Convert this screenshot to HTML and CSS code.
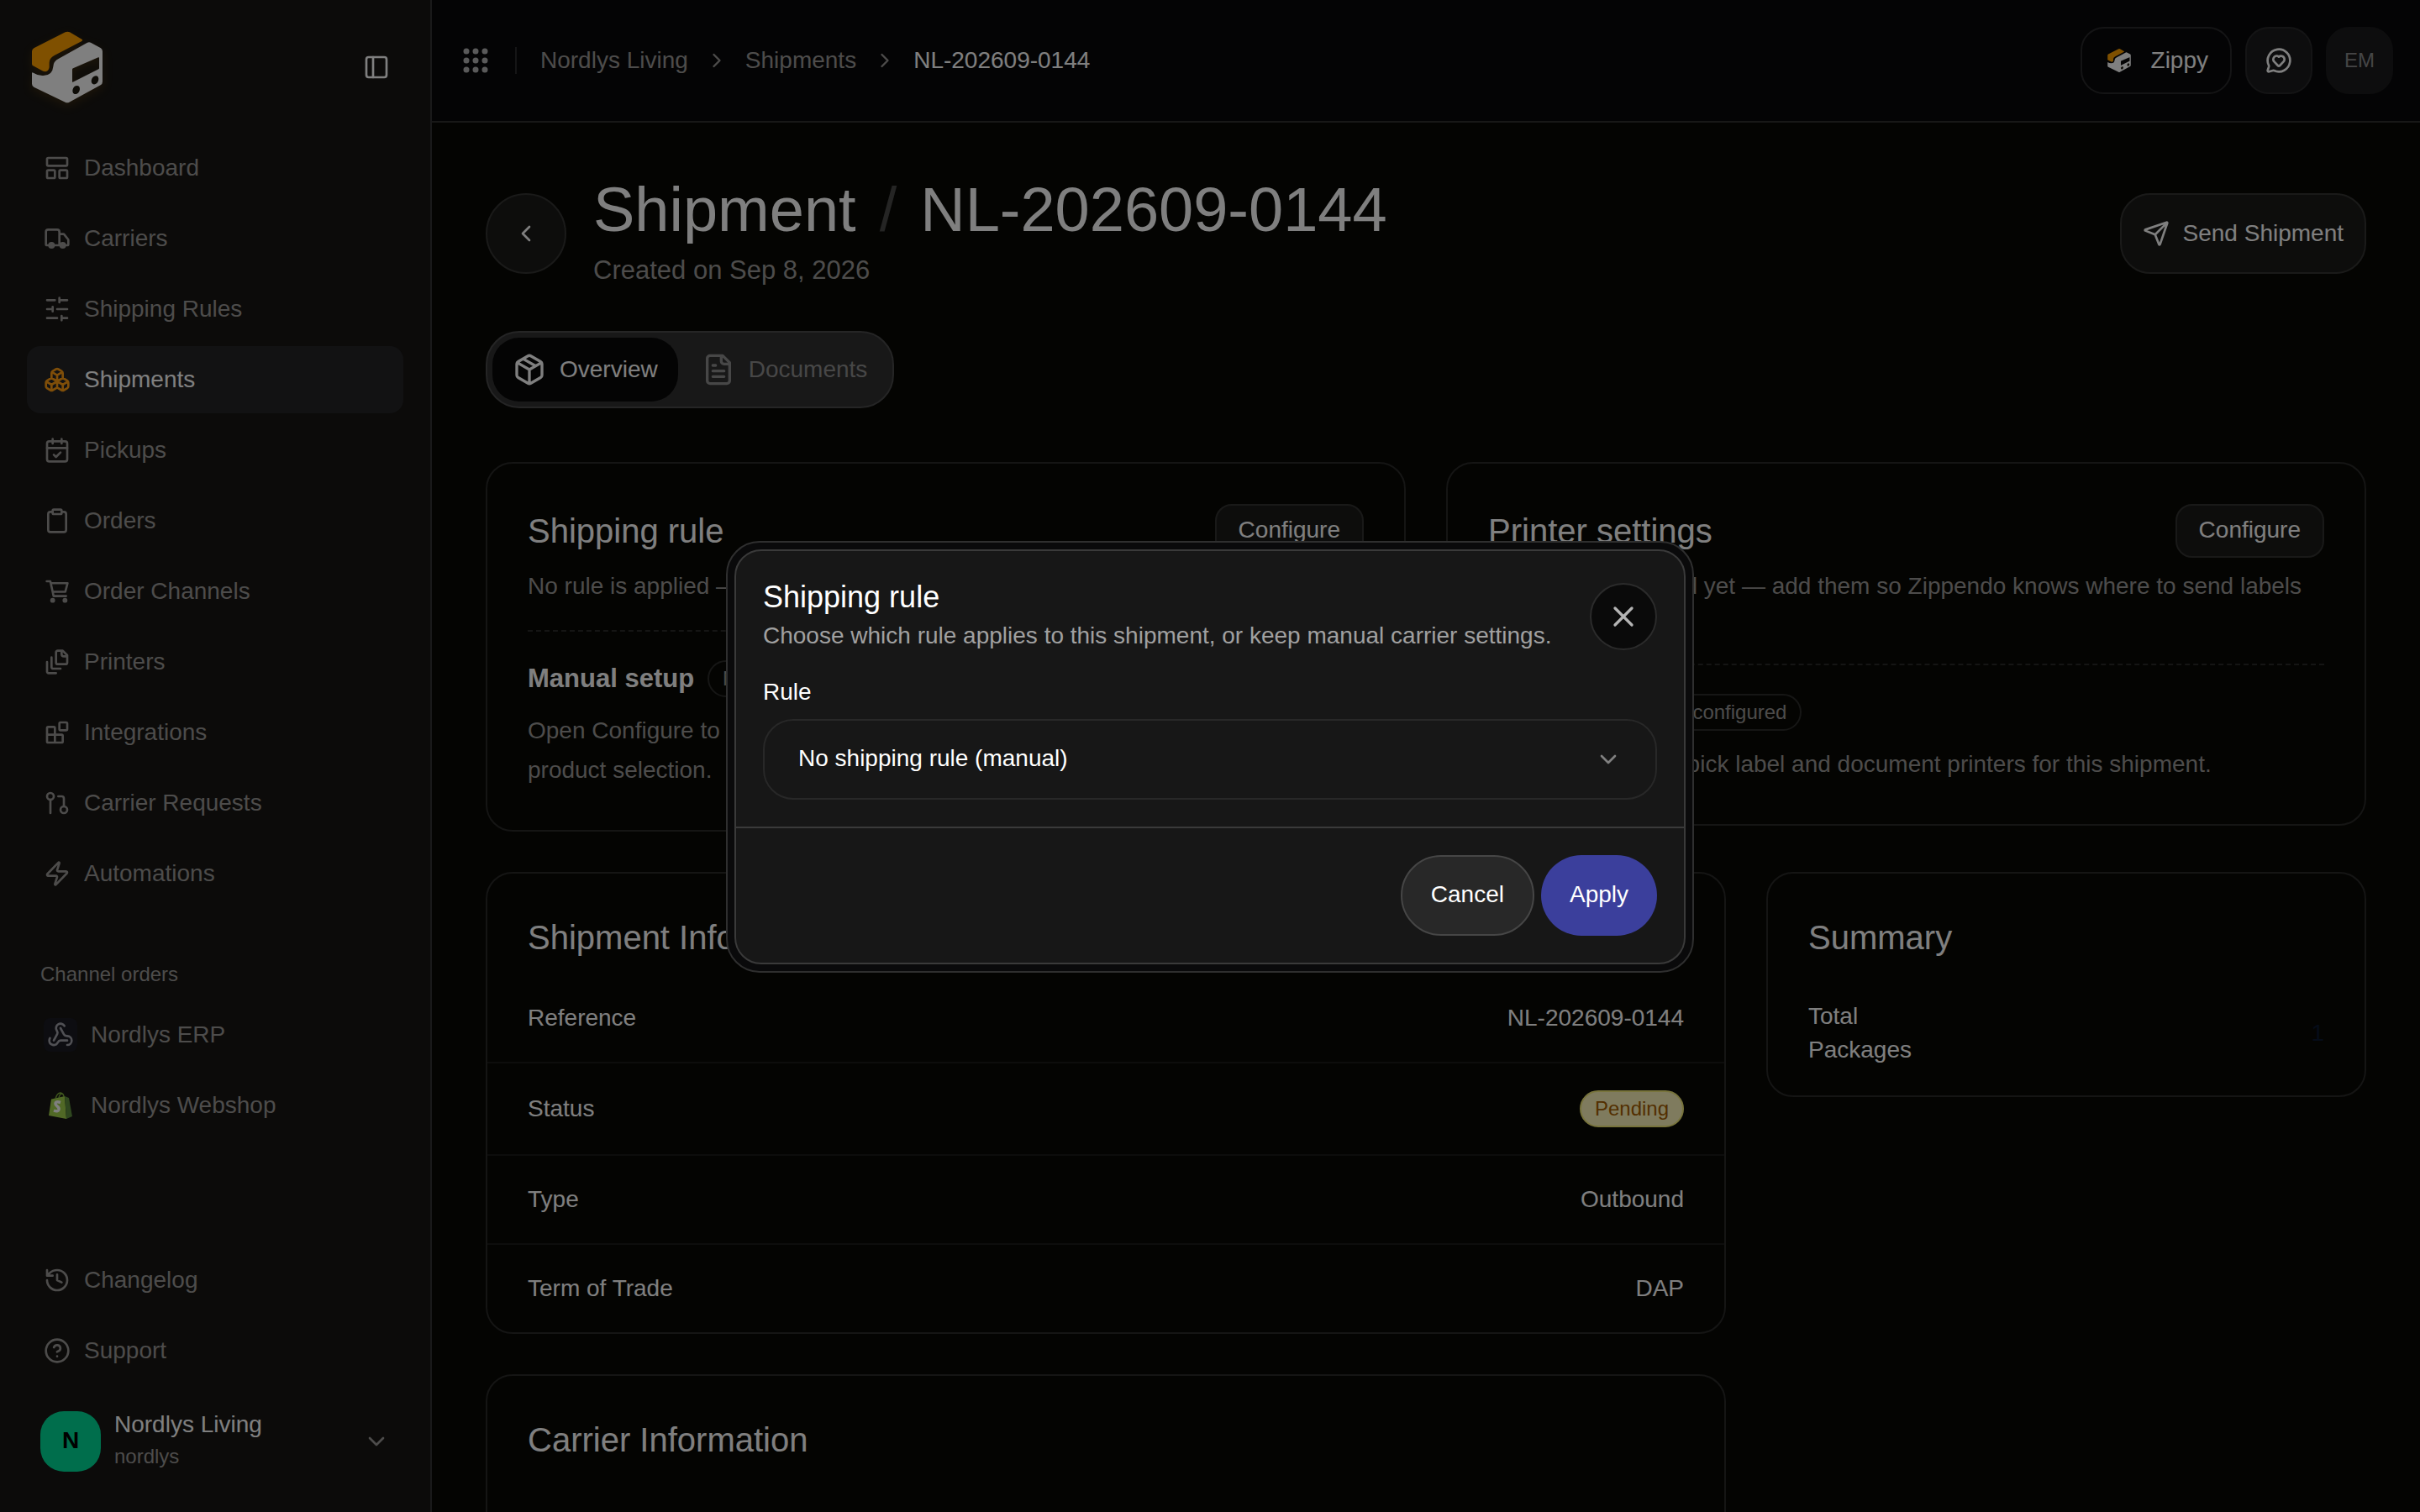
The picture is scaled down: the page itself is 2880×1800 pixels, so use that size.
FILE: index.html
```html
<!DOCTYPE html>
<html lang="en">
<head>
    <meta charset="UTF-8">
    <meta name="viewport" content="width=device-width, initial-scale=1.0">
    <title>Shipment NL-202609-0144</title>
    <link rel="stylesheet" href="styles.css">
</head>
<body>
    <svg class="defs" aria-hidden="true">
        <symbol id="logo" viewBox="0 0 252 256">
            <path fill="#ffa000" d="M0 72q0-8 7-12L119 3q8-4 16 0l43 25q5 3 0 7L80 86q-18 10-18 26v16q-3 20-22 14L4 123q-4-2-4-7z"/>
            <path fill="#fff" fill-rule="evenodd" d="M0 150q0-5 5-2 14 9 32 10 36 2 39-32 0-19 20-29L198 40q6-3 12 0l36 20q6 4 6 12v108q0 8-7 12l-112 61q-7 4-14 0L7 199q-7-4-7-12zM144 136v44q0 2 2 1l92-46q2-1 2-3V94q0-2-3-1l-90 39q-3 1-3 4z"/>
            <ellipse cx="158" cy="209" rx="12" ry="16" fill="#1c180e" transform="rotate(28 158 209)"/>
            <ellipse cx="225" cy="174" rx="12" ry="16" fill="#1c180e" transform="rotate(28 225 174)"/>
        </symbol>
        <symbol id="chevron-right" viewBox="0 0 24 24"><path d="m9 18 6-6-6-6"/></symbol>
        <symbol id="chevron-down" viewBox="0 0 24 24"><path d="m6 9 6 6 6-6"/></symbol>
    </svg>

    <div class="app">
        <aside class="sidebar">
            <div class="sidebar-top">
                <a href="#" class="brand" aria-label="Zippendo"><svg class="brand-logo"><use href="#logo"/></svg></a>
                <button class="toggle" aria-label="Toggle sidebar">
                    <svg class="icon" viewBox="0 0 24 24"><rect x="3" y="3" width="18" height="18" rx="2"/><path d="M9 3v18"/></svg>
                </button>
            </div>

            <nav class="nav">
                <a href="#" class="nav-item">
                    <svg class="icon" viewBox="0 0 24 24"><rect x="3" y="3" width="18" height="7" rx="1"/><rect x="3" y="14" width="7" height="7" rx="1"/><rect x="14" y="14" width="7" height="7" rx="1"/></svg>
                    Dashboard
                </a>
                <a href="#" class="nav-item">
                    <svg class="icon" viewBox="0 0 24 24"><path d="M14 18V6a2 2 0 0 0-2-2H4a2 2 0 0 0-2 2v11a1 1 0 0 0 1 1h2M15 18H9M19 18h2a1 1 0 0 0 1-1v-3.65a1 1 0 0 0-.22-.624l-3.48-4.35A1 1 0 0 0 17.52 8H14"/><circle cx="17" cy="18" r="2" fill="currentColor"/><circle cx="7" cy="18" r="2" fill="currentColor"/></svg>
                    Carriers
                </a>
                <a href="#" class="nav-item">
                    <svg class="icon" viewBox="0 0 24 24"><path d="M21 4h-7M10 4H3M21 12h-9M8 12H3M21 20h-5M12 20H3M14 2v4M8 10v4M16 18v4"/></svg>
                    Shipping Rules
                </a>
                <a href="#" class="nav-item active">
                    <svg class="icon" viewBox="0 0 24 24"><path d="M2.97 12.92A2 2 0 0 0 2 14.63v3.24a2 2 0 0 0 .97 1.71l3 1.8a2 2 0 0 0 2.06 0L12 19v-5.5l-5-3-4.03 2.42ZM7 16.5l-4.74-2.85M7 16.5l5-3M7 16.5v5.17M12 13.5V19l3.97 2.38a2 2 0 0 0 2.06 0l3-1.8a2 2 0 0 0 .97-1.71v-3.24a2 2 0 0 0-.97-1.71L17 10.5l-5 3ZM17 16.5l-5-3M17 16.5l4.74-2.85M17 16.5v5.17M7.97 4.42A2 2 0 0 0 7 6.13v4.37l5 3 5-3V6.13a2 2 0 0 0-.97-1.71l-3-1.8a2 2 0 0 0-2.06 0l-3 1.8ZM12 8 7.26 5.15M12 8l4.74-2.85M12 13.5V8"/></svg>
                    Shipments
                </a>
                <a href="#" class="nav-item">
                    <svg class="icon" viewBox="0 0 24 24"><path d="M8 2v4M16 2v4M3 10h18M9 16l2 2 4-4"/><rect x="3" y="4" width="18" height="18" rx="2"/></svg>
                    Pickups
                </a>
                <a href="#" class="nav-item">
                    <svg class="icon" viewBox="0 0 24 24"><rect x="8" y="2" width="8" height="4" rx="1"/><path d="M16 4h2a2 2 0 0 1 2 2v14a2 2 0 0 1-2 2H6a2 2 0 0 1-2-2V6a2 2 0 0 1 2-2h2"/></svg>
                    Orders
                </a>
                <a href="#" class="nav-item">
                    <svg class="icon" viewBox="0 0 24 24"><path d="M2.7 3h3.2l.4 1.7L8 12.4l.8 3.8H20M6.3 4.7h15l-2 7.7H8"/><circle cx="8" cy="20" r="1.2" fill="currentColor"/><circle cx="19" cy="20" r="1.2" fill="currentColor"/></svg>
                    Order Channels
                </a>
                <a href="#" class="nav-item">
                    <svg class="icon" viewBox="0 0 24 24"><path d="M21 7h-3a2 2 0 0 1-2-2V2M21 6v6.5c0 .8-.7 1.5-1.5 1.5h-7c-.8 0-1.5-.7-1.5-1.5v-9c0-.8.7-1.5 1.5-1.5H17ZM7 8v8.8c0 .3.2.6.4.8.2.2.5.4.8.4H15M3 12v8.8c0 .3.2.6.4.8.2.2.5.4.8.4H11"/></svg>
                    Printers
                </a>
                <a href="#" class="nav-item">
                    <svg class="icon" viewBox="0 0 24 24"><rect x="14" y="3" width="7" height="7" rx="1"/><path d="M10 21V8a1 1 0 0 0-1-1H4a1 1 0 0 0-1 1v12a1 1 0 0 0 1 1h12a1 1 0 0 0 1-1v-5a1 1 0 0 0-1-1H3"/></svg>
                    Integrations
                </a>
                <a href="#" class="nav-item">
                    <svg class="icon" viewBox="0 0 24 24"><circle cx="18" cy="18" r="3"/><circle cx="6" cy="6" r="3"/><path d="M13 6h3a2 2 0 0 1 2 2v7M6 9v12"/></svg>
                    Carrier Requests
                </a>
                <a href="#" class="nav-item">
                    <svg class="icon" viewBox="0 0 24 24"><path d="M4 14a1 1 0 0 1-.78-1.63l9.9-10.2a.5.5 0 0 1 .86.46l-1.92 6.02A1 1 0 0 0 13 10h7a1 1 0 0 1 .78 1.63l-9.9 10.2a.5.5 0 0 1-.86-.46l1.92-6.02A1 1 0 0 0 11 14z"/></svg>
                    Automations
                </a>
            </nav>

            <h2 class="nav-label">Channel orders</h2>
            <nav class="nav">
                <a href="#" class="nav-item">
                    <span class="channel-icon webhook"><svg class="icon" viewBox="0 0 24 24"><path d="M18 16.98h-5.99c-1.1 0-1.95.94-2.48 1.9A4 4 0 0 1 2 17c.01-.7.2-1.4.57-2M6 17l3.13-5.78c.53-.97.1-2.18-.5-3.1a4 4 0 1 1 6.89-4.06M12 6l3.13 5.73C15.66 12.7 16.9 13 18 13a4 4 0 0 1 0 8"/></svg></span>
                    Nordlys ERP
                </a>
                <a href="#" class="nav-item">
                    <span class="channel-icon">
                        <svg class="shopify" viewBox="0 0 28 32">
                            <path fill="#a2d24c" d="M3 8.500 19 5l2 27L0 28z"/>
                            <path fill="#5e8e3e" d="m19 5 5 2 4 22-7 3z"/>
                            <path fill="none" stroke="#7fae3c" stroke-width="1.500" d="M8 8q2-7 6-7 4 1 4 5M12 7q1-5 4-5"/>
                            <path fill="none" stroke="#fff" stroke-width="3.500" d="M14 12.500q-6-2-6 1.500c0 3 5 3 4 7q-1 3-6 1"/>
                        </svg>
                    </span>
                    Nordlys Webshop
                </a>
            </nav>

            <nav class="nav nav-bottom">
                <a href="#" class="nav-item">
                    <svg class="icon" viewBox="0 0 24 24"><path d="M3 12a9 9 0 1 0 9-9 9.750 9.750 0 0 0-6.740 2.740L3 8M3 3v5h5M12 7v5l4 2"/></svg>
                    Changelog
                </a>
                <a href="#" class="nav-item">
                    <svg class="icon" viewBox="0 0 24 24"><circle cx="12" cy="12" r="10"/><path d="M9.090 9a3 3 0 0 1 5.830 1c0 2-3 3-3 3M12 17h.01"/></svg>
                    Support
                </a>
            </nav>

            <button class="account">
                <span class="account-avatar">N</span>
                <span class="account-text">
                    <span class="account-name">Nordlys Living</span>
                    <span class="account-slug">nordlys</span>
                </span>
                <svg class="icon"><use href="#chevron-down"/></svg>
            </button>
        </aside>

        <div class="main">
            <header class="topbar">
                <button class="apps" aria-label="Apps">
                    <svg class="dots" viewBox="0 0 30 30" fill="currentColor"><circle cx="4" cy="4" r="3.500"/><circle cx="15" cy="4" r="3.500"/><circle cx="26" cy="4" r="3.500"/><circle cx="4" cy="15" r="3.500"/><circle cx="15" cy="15" r="3.500"/><circle cx="26" cy="15" r="3.500"/><circle cx="4" cy="26" r="3.500"/><circle cx="15" cy="26" r="3.500"/><circle cx="26" cy="26" r="3.500"/></svg>
                </button>
                <nav class="breadcrumb" aria-label="Breadcrumb">
                    <a href="#">Nordlys Living</a>
                    <svg class="icon"><use href="#chevron-right"/></svg>
                    <a href="#">Shipments</a>
                    <svg class="icon"><use href="#chevron-right"/></svg>
                    <span class="current">NL-202609-0144</span>
                </nav>
                <div class="topbar-actions">
                    <button class="top-btn zippy"><svg class="zippy-logo"><use href="#logo"/></svg>Zippy</button>
                    <button class="top-btn feedback" aria-label="Feedback">
                        <svg class="icon" viewBox="0 0 24 24"><path d="M2.992 16.342a2 2 0 0 1 .094 1.167l-1.065 3.290a1 1 0 0 0 1.236 1.168l3.413-.998a2 2 0 0 1 1.099.092 10 10 0 1 0-4.777-4.719"/><path d="M7.828 13.070A3 3 0 0 1 12 8.764a3 3 0 0 1 5.004 2.224 3 3 0 0 1-.832 2.083l-3.447 3.620a1 1 0 0 1-1.450-.001z"/></svg>
                    </button>
                    <button class="top-btn user">EM</button>
                </div>
            </header>

            <main class="content">
                <div class="page-head">
                    <button class="back" aria-label="Back"><svg class="icon" viewBox="0 0 24 24"><path d="m15 18-6-6 6-6"/></svg></button>
                    <div class="page-title">
                        <h1>Shipment <span class="slash">/</span> NL-202609-0144</h1>
                        <p>Created on Sep 8, 2026</p>
                    </div>
                    <button class="send">
                        <svg class="icon" viewBox="0 0 24 24"><path d="M14.536 21.686a.5.5 0 0 0 .937-.024l6.500-19a.496.496 0 0 0-.635-.635l-19 6.500a.5.5 0 0 0-.024.937l7.930 3.180a2 2 0 0 1 1.112 1.110zM21.854 2.147l-10.940 10.939"/></svg>
                        Send Shipment
                    </button>
                </div>

                <div class="tabs" role="tablist">
                    <button class="tab active" role="tab" aria-selected="true">
                        <svg class="icon" viewBox="0 0 24 24"><path d="M11 21.730a2 2 0 0 0 2 0l7-4A2 2 0 0 0 21 16V8a2 2 0 0 0-1-1.730l-7-4a2 2 0 0 0-2 0l-7 4A2 2 0 0 0 3 8v8a2 2 0 0 0 1 1.730zM12 22V12M3.290 7 12 12l8.710-5M7.500 4.270l9 5.150"/></svg>
                        Overview
                    </button>
                    <button class="tab" role="tab" aria-selected="false">
                        <svg class="icon" viewBox="0 0 24 24"><path d="M15 2H6a2 2 0 0 0-2 2v16a2 2 0 0 0 2 2h12a2 2 0 0 0 2-2V7ZM14 2v4a2 2 0 0 0 2 2h4M10 9H8M16 13H8M16 17H8"/></svg>
                        Documents
                    </button>
                </div>

                <div class="grid two">
                    <section class="card">
                        <div class="card-head">
                            <h2>Shipping rule</h2>
                            <button class="configure">Configure</button>
                        </div>
                        <p class="card-desc">No rule is applied — carrier settings are set manually.</p>
                        <div class="card-body">
                            <div class="state"><strong>Manual setup</strong><span class="tag">No rule</span></div>
                            <p>Open Configure to pick a shipping rule, or keep the manual carrier service and product selection.</p>
                        </div>
                    </section>
                    <section class="card">
                        <div class="card-head">
                            <h2>Printer settings</h2>
                            <button class="configure">Configure</button>
                        </div>
                        <p class="card-desc">No printers selected yet — add them so Zippendo knows where to send labels and documents.</p>
                        <div class="card-body">
                            <div class="state"><strong>No printers</strong><span class="tag">Not configured</span></div>
                            <p>Open Configure to pick label and document printers for this shipment.</p>
                        </div>
                    </section>
                </div>

                <div class="grid three">
                    <div class="stack">
                        <section class="card">
                            <h2>Shipment Information</h2>
                            <dl class="rows">
                                <div class="row"><dt>Reference</dt><dd>NL-202609-0144</dd></div>
                                <div class="row"><dt>Status</dt><dd><span class="pending">Pending</span></dd></div>
                                <div class="row"><dt>Type</dt><dd>Outbound</dd></div>
                                <div class="row"><dt>Term of Trade</dt><dd>DAP</dd></div>
                            </dl>
                        </section>
                        <section class="card carrier">
                            <h2>Carrier Information</h2>
                        </section>
                    </div>
                    <section class="card summary">
                        <h2>Summary</h2>
                        <dl class="total"><dt>Total Packages</dt><dd>1</dd></dl>
                    </section>
                </div>
            </main>
        </div>
    </div>

    <div class="overlay">
        <div class="modal" role="dialog" aria-modal="true" aria-labelledby="modal-title">
            <form class="modal-inner">
                <div class="modal-body">
                    <div class="modal-head">
                        <div>
                            <h2 id="modal-title">Shipping rule</h2>
                            <p>Choose which rule applies to this shipment, or keep manual carrier settings.</p>
                        </div>
                        <button type="button" class="close" aria-label="Close"><svg class="icon" viewBox="0 0 24 24"><path d="M18 6 6 18M6 6l12 12"/></svg></button>
                    </div>
                    <label for="rule">Rule</label>
                    <div class="select">
                        <select id="rule">
                            <option>No shipping rule (manual)</option>
                        </select>
                        <svg class="icon"><use href="#chevron-down"/></svg>
                    </div>
                </div>
                <div class="modal-foot">
                    <button type="button" class="btn cancel">Cancel</button>
                    <button type="submit" class="btn apply">Apply</button>
                </div>
            </form>
        </div>
    </div>
</body>
</html>
```

FILE: styles.css
```css
* {
    box-sizing: border-box;
    margin: 0;
    padding: 0;
}

body {
    font-family: "Liberation Sans", Arial, sans-serif;
    font-size: 28px;
    line-height: 40px;
    color: #fff;
    background: #080805;
}

a {
    color: inherit;
    text-decoration: none;
}

button,
select {
    font: inherit;
    color: inherit;
    background: none;
    border: none;
    cursor: pointer;
}

h1, h2 {
    font-weight: normal;
}

.defs {
    position: absolute;
    width: 0;
    height: 0;
}

.icon {
    width: 32px;
    height: 32px;
    flex: none;
    fill: none;
    stroke: currentColor;
    stroke-width: 2;
    stroke-linecap: round;
    stroke-linejoin: round;
}

.app {
    display: flex;
    height: 100vh;
    overflow: hidden;
}

/* sidebar */
.sidebar {
    display: flex;
    flex-direction: column;
    flex: none;
    width: 514px;
    padding: 32px 32px 48px;
    background: #181614;
    border-right: 2px solid #333335;
}

.sidebar-top {
    display: flex;
    align-items: center;
    justify-content: space-between;
    height: 96px;
    margin-bottom: 32px;
    padding: 0 16px 0 6px;
}

.brand {
    display: flex;
}

.brand-logo {
    width: 84px;
    height: 86px;
    filter: drop-shadow(0 4px 6px rgba(255, 160, 0, 0.15));
}

.toggle,
.apps {
    display: flex;
}

.nav {
    display: flex;
    flex-direction: column;
    gap: 4px;
}

.nav-item {
    display: flex;
    align-items: center;
    gap: 16px;
    height: 80px;
    padding: 0 20px;
    border-radius: 16px;
    color: #9a9896;
}

.nav-item.active {
    color: #fff;
    background: #252527;
}

.nav-item.active .icon {
    color: #ff9c12;
}

.nav-label {
    margin: 64px 16px 16px;
    font-size: 24px;
    line-height: 32px;
    color: #9a9896;
}

.channel-icon {
    display: flex;
    align-items: center;
    justify-content: center;
    width: 40px;
    height: 40px;
    border-radius: 8px;
}

.channel-icon.webhook {
    color: #a0a0a8;
    background: #1a1a22;
}

.shopify {
    width: 28px;
    height: 32px;
}

.nav-bottom {
    margin-top: auto;
}

.account {
    display: flex;
    align-items: center;
    gap: 16px;
    height: 72px;
    margin-top: 32px;
    padding: 0 16px;
    color: #9a9896;
    text-align: left;
}

.account-avatar {
    width: 72px;
    height: 72px;
    border-radius: 28px;
    background: #00dc98;
    color: #000;
    font-size: 28px;
    font-weight: bold;
    line-height: 70px;
    text-align: center;
}

.account-text {
    display: flex;
    flex: 1;
    flex-direction: column;
}

.account-name {
    line-height: 36px;
    color: #fff;
}

.account-slug {
    font-size: 24px;
    line-height: 40px;
}

/* top bar */
.main {
    display: flex;
    flex: 1;
    flex-direction: column;
    min-width: 0;
}

.topbar {
    display: flex;
    flex: none;
    align-items: center;
    height: 146px;
    padding: 0 32px 0 37px;
    background: #09090b;
    border-bottom: 2px solid #30302f;
}

.apps {
    color: #b4b4b4;
}

.dots {
    width: 30px;
    height: 30px;
}

.breadcrumb {
    display: flex;
    align-items: center;
    gap: 20px;
    margin-left: 32px;
    padding-left: 28px;
    border-left: 2px solid #2a2a2c;
    line-height: 32px;
    color: #9a9896;
}

.breadcrumb .icon {
    width: 28px;
    height: 28px;
}

.current {
    color: #fff;
}

.topbar-actions {
    display: flex;
    gap: 16px;
    margin-left: auto;
}

.top-btn {
    display: flex;
    align-items: center;
    justify-content: center;
    width: 80px;
    height: 80px;
    border: 2px solid #29292b;
    border-radius: 28px;
}

.top-btn.zippy {
    gap: 24px;
    width: auto;
    padding: 0 26px 0 30px;
}

.zippy-logo {
    width: 28px;
    height: 28px;
}

.top-btn.feedback {
    background: #1b1b1c;
}

.top-btn.user {
    background: #1b1b1c;
    border-color: #1b1b1c;
    color: #8a8a8c;
    font-size: 24px;
}

/* content */
.content {
    padding: 60px 64px;
}

.page-head {
    display: flex;
    align-items: center;
    gap: 32px;
    margin-bottom: 44px;
}

.back,
.send {
    display: flex;
    align-items: center;
    justify-content: center;
    height: 96px;
    background: #1b1b19;
    border: 2px solid #353533;
    border-radius: 36px;
}

.back {
    width: 96px;
    border-radius: 50%;
}

.send {
    gap: 16px;
    margin-left: auto;
    padding: 0 25px;
}

.page-title h1 {
    display: flex;
    gap: 28px;
    font-size: 74px;
    line-height: 88px;
}

.slash {
    color: #4a4a48;
}

.page-title p {
    font-size: 31px;
    line-height: 56px;
    color: #9a9896;
}

.tabs {
    display: inline-flex;
    gap: 4px;
    padding: 6px;
    margin-bottom: 64px;
    background: #303031;
    border: 2px solid #4a4a4a;
    border-radius: 40px;
}

.tab {
    display: flex;
    align-items: center;
    gap: 16px;
    height: 76px;
    padding: 0 24px;
    border-radius: 32px;
    color: #8f8f8f;
}

.tab.active {
    color: #fff;
    background: #080808;
}

.tab .icon {
    width: 40px;
    height: 40px;
}

.grid {
    display: grid;
    align-items: start;
    gap: 48px;
    margin-bottom: 48px;
}

.grid.two {
    grid-template-columns: 1fr 1fr;
}

.grid.three {
    grid-template-columns: repeat(3, 1fr);
}

.stack {
    display: grid;
    grid-column: span 2;
    gap: 48px;
}

.card {
    padding: 48px;
    border: 2px solid #2a2a28;
    border-radius: 32px;
}

.card h2 {
    font-size: 40px;
    line-height: 56px;
}

.card-head {
    display: flex;
    align-items: center;
    justify-content: space-between;
    height: 64px;
    margin-bottom: 14px;
}

.configure {
    height: 64px;
    padding: 0 26px 2px;
    background: #1b1b19;
    border: 2px solid #333331;
    border-radius: 20px;
}

.card-desc,
.card-body p {
    color: #9a9896;
}

.card-body {
    margin-top: 32px;
    padding-top: 32px;
    border-top: 2px dashed #2a2a28;
}

.card-body p {
    margin-top: 14px;
    line-height: 47px;
}

.state {
    display: flex;
    align-items: center;
    gap: 16px;
    height: 48px;
}

.state strong {
    font-size: 31px;
}

.tag,
.pending {
    padding: 0 16px;
    border: 2px solid #2d2d2b;
    border-radius: 22px;
    font-size: 24px;
    line-height: 40px;
}

.tag {
    color: #9a9896;
}

.rows {
    margin: 16px -48px -48px;
}

.row {
    display: flex;
    align-items: center;
    justify-content: space-between;
    padding: 32px 48px;
    border-bottom: 2px solid #1b1b19;
}

.row:last-child {
    border-bottom: none;
}

.pending {
    display: block;
    color: #a65f00;
    background: #fef6bc;
    border-color: #f0e878;
}

.carrier {
    min-height: 400px;
}

.summary {
    padding-bottom: 34px;
}

.total {
    display: flex;
    align-items: center;
    justify-content: space-between;
    margin-top: 46px;
}

.total dt {
    width: min-content;
}

.total dd {
    color: #0a1830;
}

/* shipping rule modal */
.overlay {
    position: fixed;
    inset: 0;
    display: flex;
    align-items: center;
    justify-content: center;
    padding-top: 2px;
    background: rgba(0, 0, 0, 0.5);
}

.modal {
    width: 1152px;
    max-width: 90%;
    padding: 8px;
    background: #0a0a0b;
    border: 2px solid #2f2f2f;
    border-radius: 40px;
}

.modal-inner {
    background: #171717;
    border: 2px solid #3a3a3a;
    border-radius: 32px;
}

.modal-body {
    padding: 32px;
}

.modal-head {
    display: flex;
    align-items: center;
    justify-content: space-between;
    margin-bottom: 24px;
}

.modal-head h2 {
    font-size: 36px;
    line-height: 46px;
}

.modal-head p {
    line-height: 46px;
    color: #a0a0a0;
}

.close {
    display: flex;
    align-items: center;
    justify-content: center;
    width: 80px;
    height: 80px;
    background: #0a0a0a;
    border: 2px solid #2b2b2b;
    border-radius: 50%;
    color: #b4b4b4;
}

.close .icon {
    width: 40px;
    height: 40px;
}

.modal-body label {
    display: block;
    margin-bottom: 12px;
}

.select {
    position: relative;
}

.select select {
    display: block;
    width: 100%;
    height: 96px;
    padding: 0 96px 2px 40px;
    border: 2px solid #282828;
    border-radius: 36px;
    appearance: none;
}

.select .icon {
    position: absolute;
    top: 32px;
    right: 42px;
    color: #808080;
    pointer-events: none;
}

.modal-foot {
    display: flex;
    justify-content: flex-end;
    gap: 8px;
    padding: 32px;
    border-top: 2px solid #3a3a3a;
}

.btn {
    height: 96px;
    padding: 0 34px 2px;
    border-radius: 48px;
}

.cancel {
    background: #282828;
    border: 2px solid #464646;
}

.apply {
    background: #3b3f9c;
}
```
